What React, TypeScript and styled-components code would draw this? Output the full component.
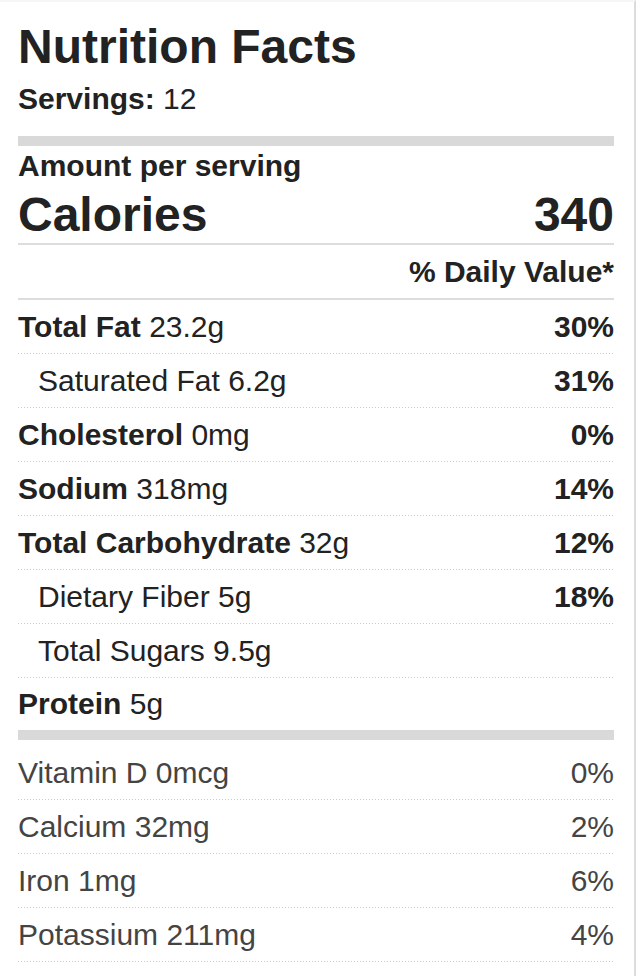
import React from 'react';
import styled, { createGlobalStyle } from 'styled-components';

// Nutrition label data
interface Nutrient {
  name: string;
  amount: string;
  dv?: string;
  indent?: boolean;
  strong?: boolean;
}

const nutrients: Nutrient[] = [
  { name: 'Total Fat', amount: '23.2g', dv: '30%', strong: true },
  { name: 'Saturated Fat', amount: '6.2g', dv: '31%', indent: true },
  { name: 'Cholesterol', amount: '0mg', dv: '0%', strong: true },
  { name: 'Sodium', amount: '318mg', dv: '14%', strong: true },
  { name: 'Total Carbohydrate', amount: '32g', dv: '12%', strong: true },
  { name: 'Dietary Fiber', amount: '5g', dv: '18%', indent: true },
  { name: 'Total Sugars', amount: '9.5g', indent: true },
];

const vitamins: Nutrient[] = [
  { name: 'Vitamin D', amount: '0mcg', dv: '0%' },
  { name: 'Calcium', amount: '32mg', dv: '2%' },
  { name: 'Iron', amount: '1mg', dv: '6%' },
  { name: 'Potassium', amount: '211mg', dv: '4%' },
];

const GlobalStyle = createGlobalStyle`
  html, body {
    margin: 0;
    padding: 0;
    background: #fff;
  }
  body {
    font-family: "Liberation Sans", Arial, Helvetica, sans-serif;
    color: #222;
  }
`;

const Label = styled.div`
  box-sizing: border-box;
  width: 636px;
  min-height: 976px;
  padding: 0 20px 0 18px;
  border-top: 2px solid #f6f6f6;
  border-right: 2px solid #dcdcdc;
  background: #fff;
  font-family: "Liberation Sans", Arial, sans-serif;
`;

const Title = styled.h1`
  margin: 18px 0 0;
  font-size: 48px;
  line-height: 54px;
  font-weight: 700;
  color: #222;
`;

const Servings = styled.div`
  margin-top: 8px;
  font-size: 30px;
  line-height: 34px;
  b {
    font-weight: 700;
  }
`;

const HeavyBar = styled.div<{ $gapTop?: number; $gapBottom?: number }>`
  height: 10px;
  background: #d9d9d9;
  margin-top: ${(p) => p.$gapTop ?? 0}px;
  margin-bottom: ${(p) => p.$gapBottom ?? 0}px;
`;

const AmountPer = styled.div`
  margin-top: 3px;
  font-size: 30px;
  line-height: 34px;
  font-weight: 700;
`;

const CaloriesRow = styled.div`
  display: flex;
  justify-content: space-between;
  align-items: baseline;
  margin-top: 6px;
  padding-bottom: 2px;
  border-bottom: 2px solid #dddddd;
  font-size: 48px;
  line-height: 52px;
  font-weight: 700;
`;

const DailyHead = styled.div`
  margin-top: 10px;
  padding-bottom: 9px;
  border-bottom: 2px solid #dddddd;
  text-align: right;
  font-size: 30px;
  line-height: 34px;
  font-weight: 700;
`;

const Row = styled.div<{ $indent?: boolean; $muted?: boolean; $dots?: boolean; $h?: number }>`
  display: flex;
  justify-content: space-between;
  align-items: center;
  box-sizing: border-box;
  height: ${(p) => p.$h ?? 54}px;
  padding-left: ${(p) => (p.$indent ? 20 : 0)}px;
  font-size: 30px;
  line-height: 34px;
  color: ${(p) => (p.$muted ? '#444' : '#222')};
  background-image: ${(p) =>
    p.$dots ? 'linear-gradient(to right, #c9c9c9 1.5px, transparent 1.5px)' : 'none'};
  background-size: 3px 1px;
  background-repeat: repeat-x;
  background-position: left bottom;
`;

const Name = styled.span`
  white-space: nowrap;
`;

const Strong = styled.b`
  font-weight: 700;
`;

const Percent = styled.span<{ $bold?: boolean }>`
  font-weight: ${(p) => (p.$bold ? 700 : 400)};
`;

const App: React.FC = () => {
  return (
    <>
      <GlobalStyle />
      <Label>
        <Title>Nutrition Facts</Title>
        <Servings>
          <b>Servings:</b> 12
        </Servings>
        <HeavyBar $gapTop={20} />
        <AmountPer>Amount per serving</AmountPer>
        <CaloriesRow>
          <span>Calories</span>
          <span>340</span>
        </CaloriesRow>
        <DailyHead>% Daily Value*</DailyHead>

        {nutrients.map((n) => (
          <Row key={n.name} $indent={n.indent} $dots>
            <Name>
              {n.strong ? <Strong>{n.name}</Strong> : n.name} {n.amount}
            </Name>
            {n.dv && <Percent $bold>{n.dv}</Percent>}
          </Row>
        ))}
        <Row $h={52}>
          <Name>
            <Strong>Protein</Strong> 5g
          </Name>
        </Row>

        <HeavyBar $gapBottom={6} />

        {vitamins.map((v) => (
          <Row key={v.name} $muted $dots>
            <Name>
              {v.name} {v.amount}
            </Name>
            <Percent>{v.dv}</Percent>
          </Row>
        ))}
      </Label>
    </>
  );
};

export default App;
